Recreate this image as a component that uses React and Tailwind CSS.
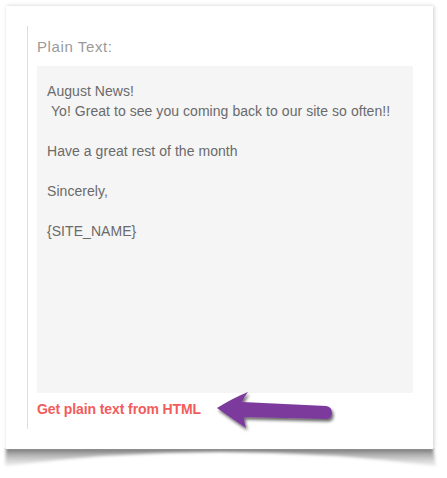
import React from "react";

export default function App() {
  return (
    <div className="relative w-[447px] h-[478px] bg-white overflow-hidden" style={{ fontFamily: '"Liberation Sans", Arial, sans-serif' }}>
      <div className="ml-[6px] mt-[6px] w-[427px] h-[443px] bg-white shadow-[1px_0_4px_rgba(0,0,0,0.2)] pt-[20px] relative z-10">
        <div className="ml-[21px] border-l border-[#dddddd] pl-[9px] pr-[20px] pb-[11px]">
          <div className="pt-[11px] text-[15px] leading-[20px] text-[#9a9a9a] tracking-[0.6px]">Plain Text:</div>
          <div className="mt-[9px] w-[376px] h-[327px] bg-[#f5f5f5] pt-[15px] px-[10px] text-[14px] leading-[20px] text-[#6a6a6a] tracking-[0.05px] whitespace-pre-wrap">
            {"August News!\n Yo! Great to see you coming back to our site so often!!\n\nHave a great rest of the month\n\nSincerely,\n\n{SITE_NAME}"}
          </div>
          <div className="mt-[7px] text-[14px] leading-[18px] font-bold text-[#f25c5c] tracking-[-0.1px]">Get plain text from HTML</div>
        </div>
      </div>
      <svg className="block -mt-[1px]" width="447" height="28" viewBox="0 0 447 28">
        <defs>
          <linearGradient id="sg" x1="0" y1="0" x2="0" y2="1">
            <stop offset="0" stopColor="#6e6e6e" stopOpacity="0.95" />
            <stop offset="1" stopColor="#bdbdbd" stopOpacity="0.25" />
          </linearGradient>
          <filter id="bl" x="-5%" y="-50%" width="110%" height="200%">
            <feGaussianBlur stdDeviation="1.4" />
          </filter>
        </defs>
        <path d="M6 0 L433 0 L436 18 Q220 -10 5 18 Z" fill="url(#sg)" filter="url(#bl)" />
      </svg>
      <svg className="absolute left-[208px] top-[385px] z-20" width="135" height="52" viewBox="208 385 135 52">
        <defs>
          <filter id="ds" x="-20%" y="-40%" width="140%" height="180%">
            <feDropShadow dx="1.5" dy="2.5" stdDeviation="1.5" floodColor="#000" floodOpacity="0.6" />
          </filter>
        </defs>
        <path
          d="M217 408 Q233 398 248 392 Q244 397 242 402 L326 406 Q332 407 332 413 Q332 419 326 419 L244 417 Q244 422 246 428 Q231 418 217 408 Z"
          fill="#7b3a9c"
          filter="url(#ds)"
        />
      </svg>
    </div>
  );
}
